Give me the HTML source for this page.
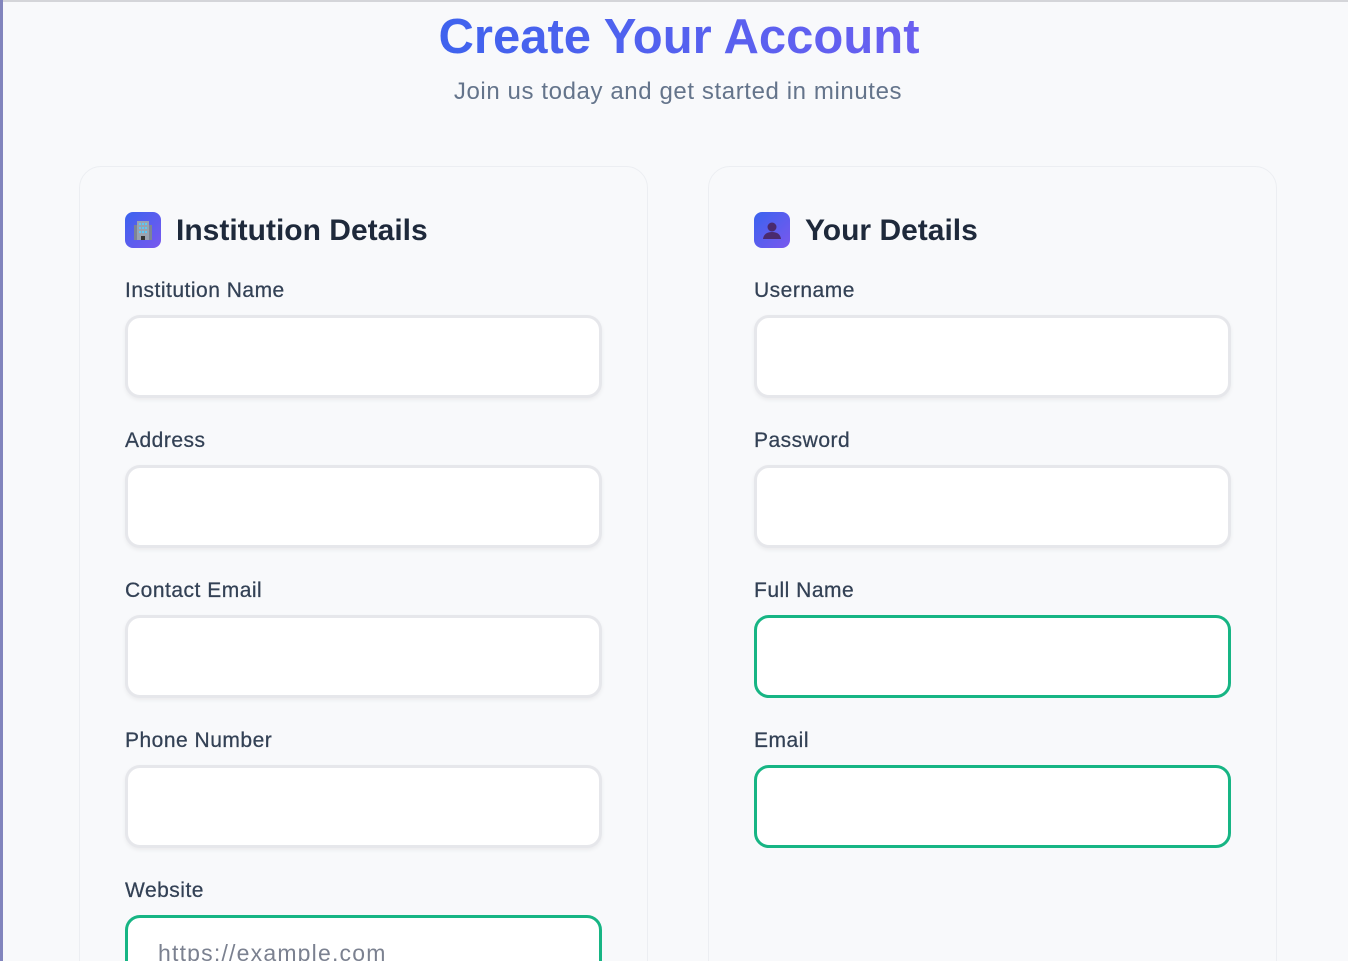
<!DOCTYPE html>
<html><head><meta charset="utf-8"><style>
*{box-sizing:border-box;margin:0;padding:0}
html,body{width:1348px;height:961px;overflow:hidden}
body{background:#f8f9fb;font-family:"Liberation Sans",sans-serif;position:relative}
.lbar{position:absolute;left:0;top:0;width:3px;height:961px;background:#8285bd}
.tline{position:absolute;left:0;top:0;width:1348px;height:2px;background:#d4d5d9}
h1{position:absolute;left:0;width:1358px;top:9px;text-align:center;font-size:49px;font-weight:700;line-height:56px}
h1 span{background:linear-gradient(90deg,#3f63ee,#6a5ff0);-webkit-background-clip:text;background-clip:text;color:transparent}
.sub{position:absolute;left:0;width:1356px;top:77px;text-align:center;font-size:24px;letter-spacing:0.6px;color:#64748b;line-height:30px}
.card{position:absolute;top:166px;width:569px;height:820px;border:1px solid #eceef2;border-radius:22px;background:#f8f9fb}
.ic{position:absolute;left:45px;top:45px;width:36px;height:36px;border-radius:8px;background:linear-gradient(135deg,#3a63ef,#7a58ee)}
.h2{position:absolute;left:96px;top:46px;font-size:30px;font-weight:700;color:#1e293b;line-height:36px}
.lab{position:absolute;left:45px;font-size:21px;letter-spacing:0.5px;color:#334155;line-height:24px;-webkit-text-stroke:0.25px #334155}
.in{position:absolute;left:45px;width:477px;height:83px;border:3px solid #e6e7eb;border-radius:15px;background:#fff;box-shadow:0 2px 4px rgba(0,0,0,.06)}
.g{border-color:#17b584;box-shadow:none}
.ph{position:absolute;left:30px;top:22px;font-size:23px;letter-spacing:1.2px;color:#7b8190}
</style></head><body>
<div class="tline"></div><div class="lbar"></div>
<h1><span>Create Your Account</span></h1>
<div class="sub">Join us today and get started in minutes</div>

<div class="card" style="left:79px">
 <div class="ic"><svg width="36" height="36"><rect x="12" y="9" width="12" height="19" fill="#9aa2b0"/><rect x="9" y="13" width="3" height="15" fill="#7d8594"/><rect x="24" y="13" width="3" height="15" fill="#7d8594"/><g fill="#5cc8f5"><rect x="14" y="11" width="2" height="2"/><rect x="17" y="11" width="2" height="2"/><rect x="20" y="11" width="2" height="2"/><rect x="14" y="15" width="2" height="2"/><rect x="17" y="15" width="2" height="2"/><rect x="20" y="15" width="2" height="2"/><rect x="14" y="19" width="2" height="2"/><rect x="17" y="19" width="2" height="2"/><rect x="20" y="19" width="2" height="2"/></g><rect x="16" y="24" width="4" height="4" fill="#333"/></svg></div>
 <div class="h2">Institution Details</div>
 <div class="lab" style="top:112px">Institution Name</div>
 <div class="in" style="top:148px"></div>
 <div class="lab" style="top:262px">Address</div>
 <div class="in" style="top:298px"></div>
 <div class="lab" style="top:412px">Contact Email</div>
 <div class="in" style="top:448px"></div>
 <div class="lab" style="top:562px">Phone Number</div>
 <div class="in" style="top:598px"></div>
 <div class="lab" style="top:712px">Website</div>
 <div class="in g" style="top:748px"><div class="ph">https://example.com</div></div>
</div>

<div class="card" style="left:708px">
 <div class="ic"><svg width="36" height="36"><circle cx="18" cy="15" r="4.5" fill="#4a2a6e"/><path d="M9 27 Q10 20 18 20 Q26 20 27 27 Z" fill="#4a2a6e"/></svg></div>
 <div class="h2">Your Details</div>
 <div class="lab" style="top:112px">Username</div>
 <div class="in" style="top:148px"></div>
 <div class="lab" style="top:262px">Password</div>
 <div class="in" style="top:298px"></div>
 <div class="lab" style="top:412px">Full Name</div>
 <div class="in g" style="top:448px"></div>
 <div class="lab" style="top:562px">Email</div>
 <div class="in g" style="top:598px"></div>
</div>
</body></html>
